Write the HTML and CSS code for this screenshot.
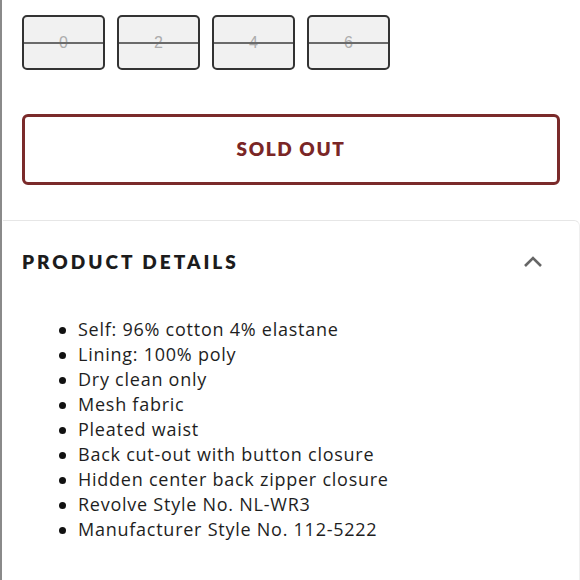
FILE: index.html
```html
<!DOCTYPE html>
<html>
<head>
<meta charset="utf-8">
<link rel="stylesheet" href="styles.css">
</head>
<body>
<div class="page">
  <div class="sizes">
    <div class="size"><span>0</span></div>
    <div class="size"><span>2</span></div>
    <div class="size"><span>4</span></div>
    <div class="size"><span>6</span></div>
  </div>
  <div class="btn-wrap">
    <div class="sold">SOLD OUT</div>
  </div>
  <section class="details">
    <div class="details-head">
      <h2>PRODUCT DETAILS</h2>
      <svg class="chev" width="20" height="12" viewBox="0 0 20 12"><path d="M2 10 L10 2 L18 10" fill="none" stroke="#666" stroke-width="2.6"/></svg>
    </div>
    <ul class="list">
      <li>Self: 96% cotton 4% elastane</li>
      <li>Lining: 100% poly</li>
      <li>Dry clean only</li>
      <li>Mesh fabric</li>
      <li>Pleated waist</li>
      <li>Back cut-out with button closure</li>
      <li>Hidden center back zipper closure</li>
      <li>Revolve Style No. NL-WR3</li>
      <li>Manufacturer Style No. 112-5222</li>
    </ul>
  </section>
</div>
</body>
</html>
```
FILE: styles.css
```css
html, body {
  margin: 0;
  padding: 0;
  background: #fff;
}
.page {
  width: 578px;
  height: 580px;
  border-left: 2px solid #8a8a8a;
  overflow: hidden;
  font-family: "Open Sans", sans-serif;
}
.sizes {
  display: flex;
  gap: 12px;
  padding: 15px 0 0 20px;
}
.size {
  position: relative;
  width: 79px;
  height: 51px;
  border: 2px solid #333;
  border-radius: 5px;
  background: #f1f1f1;
  display: flex;
  align-items: center;
  justify-content: center;
}
.size span {
  font-family: "Liberation Sans", sans-serif;
  font-size: 16px;
  color: #acacac;
}
.size::after {
  content: "";
  position: absolute;
  left: 0;
  right: 0;
  top: 25px;
  height: 2px;
  background: #6a6a6a;
}
.btn-wrap {
  padding: 44px 20px 0 20px;
}
.sold {
  height: 62px;
  padding-bottom: 3px;
  border: 3px solid #7a2a2a;
  border-radius: 6px;
  display: flex;
  align-items: center;
  justify-content: center;
  font-family: "Lato", sans-serif;
  font-weight: 800;
  font-size: 19px;
  letter-spacing: 1.6px;
  color: #7a2626;
}
.details {
  margin-top: 35px;
  margin-left: 1px;
  border-top: 1px solid #e6e6e6;
  border-right: 1px solid #efefef;
  border-top-right-radius: 6px;
  height: 400px;
}
.details-head {
  display: flex;
  align-items: center;
  justify-content: space-between;
  padding: 29px 36px 0 19px;
}
.details-head h2 {
  margin: 0;
  font-family: "Lato", sans-serif;
  font-weight: 800;
  font-size: 19px;
  letter-spacing: 3px;
  color: #1c1c1c;
}
.chev {
  display: block;
}
.list {
  list-style: none;
  margin: 44px 0 0 0;
  padding: 0 0 0 75px;
  font-family: "Open Sans", sans-serif;
  font-size: 18px;
  line-height: 25px;
  letter-spacing: 0.75px;
  color: #1e1e1e;
}
.list li {
  position: relative;
}
.list li::before {
  content: "";
  position: absolute;
  left: -19px;
  top: 10px;
  width: 7px;
  height: 7px;
  border-radius: 50%;
  background: #111;
}
```
